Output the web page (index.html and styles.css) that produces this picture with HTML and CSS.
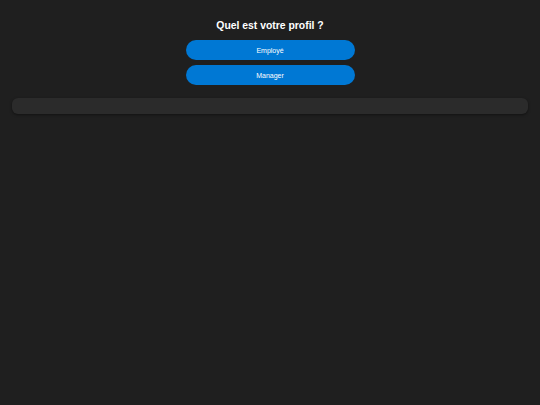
FILE: index.html
```html
<!DOCTYPE html>
<html lang="fr">
<head>
<meta charset="utf-8">
<title>Profil</title>
<link rel="stylesheet" href="styles.css">
</head>
<body>
<main class="page">
  <section class="chooser">
    <h2 class="title">Quel est votre profil ?</h2>
    <div class="choices">
      <button class="choice" type="button">Employé</button>
      <button class="choice" type="button">Manager</button>
    </div>
  </section>
  <div class="panel"></div>
</main>
</body>
</html>
```

FILE: styles.css
```css
html, body {
  margin: 0;
  padding: 0;
  background: #1f1f1f;
}

body {
  font-family: "Liberation Sans", Arial, sans-serif;
  color: #ffffff;
}

.page {
  padding: 18px 12px 17px;
  display: flex;
  flex-direction: column;
}

.chooser {
  display: flex;
  flex-direction: column;
  align-items: center;
}

.title {
  margin: 0 0 7px;
  font-size: 10.4px;
  line-height: 15px;
  font-weight: 700;
  color: #ffffff;
}

.choices {
  display: flex;
  flex-direction: column;
  gap: 5px;
  width: 169px;
}

.choice {
  height: 20px;
  border: none;
  border-radius: 10px;
  background: #0078d4;
  color: #ffffff;
  font-family: "Liberation Sans", Arial, sans-serif;
  font-size: 7px;
  padding: 0;
  cursor: pointer;
}

.panel {
  margin-top: 13px;
  height: 16px;
  border-radius: 6px;
  background: #2b2b2b;
  box-shadow: 0 1px 3px rgba(0, 0, 0, 0.45);
}
```
